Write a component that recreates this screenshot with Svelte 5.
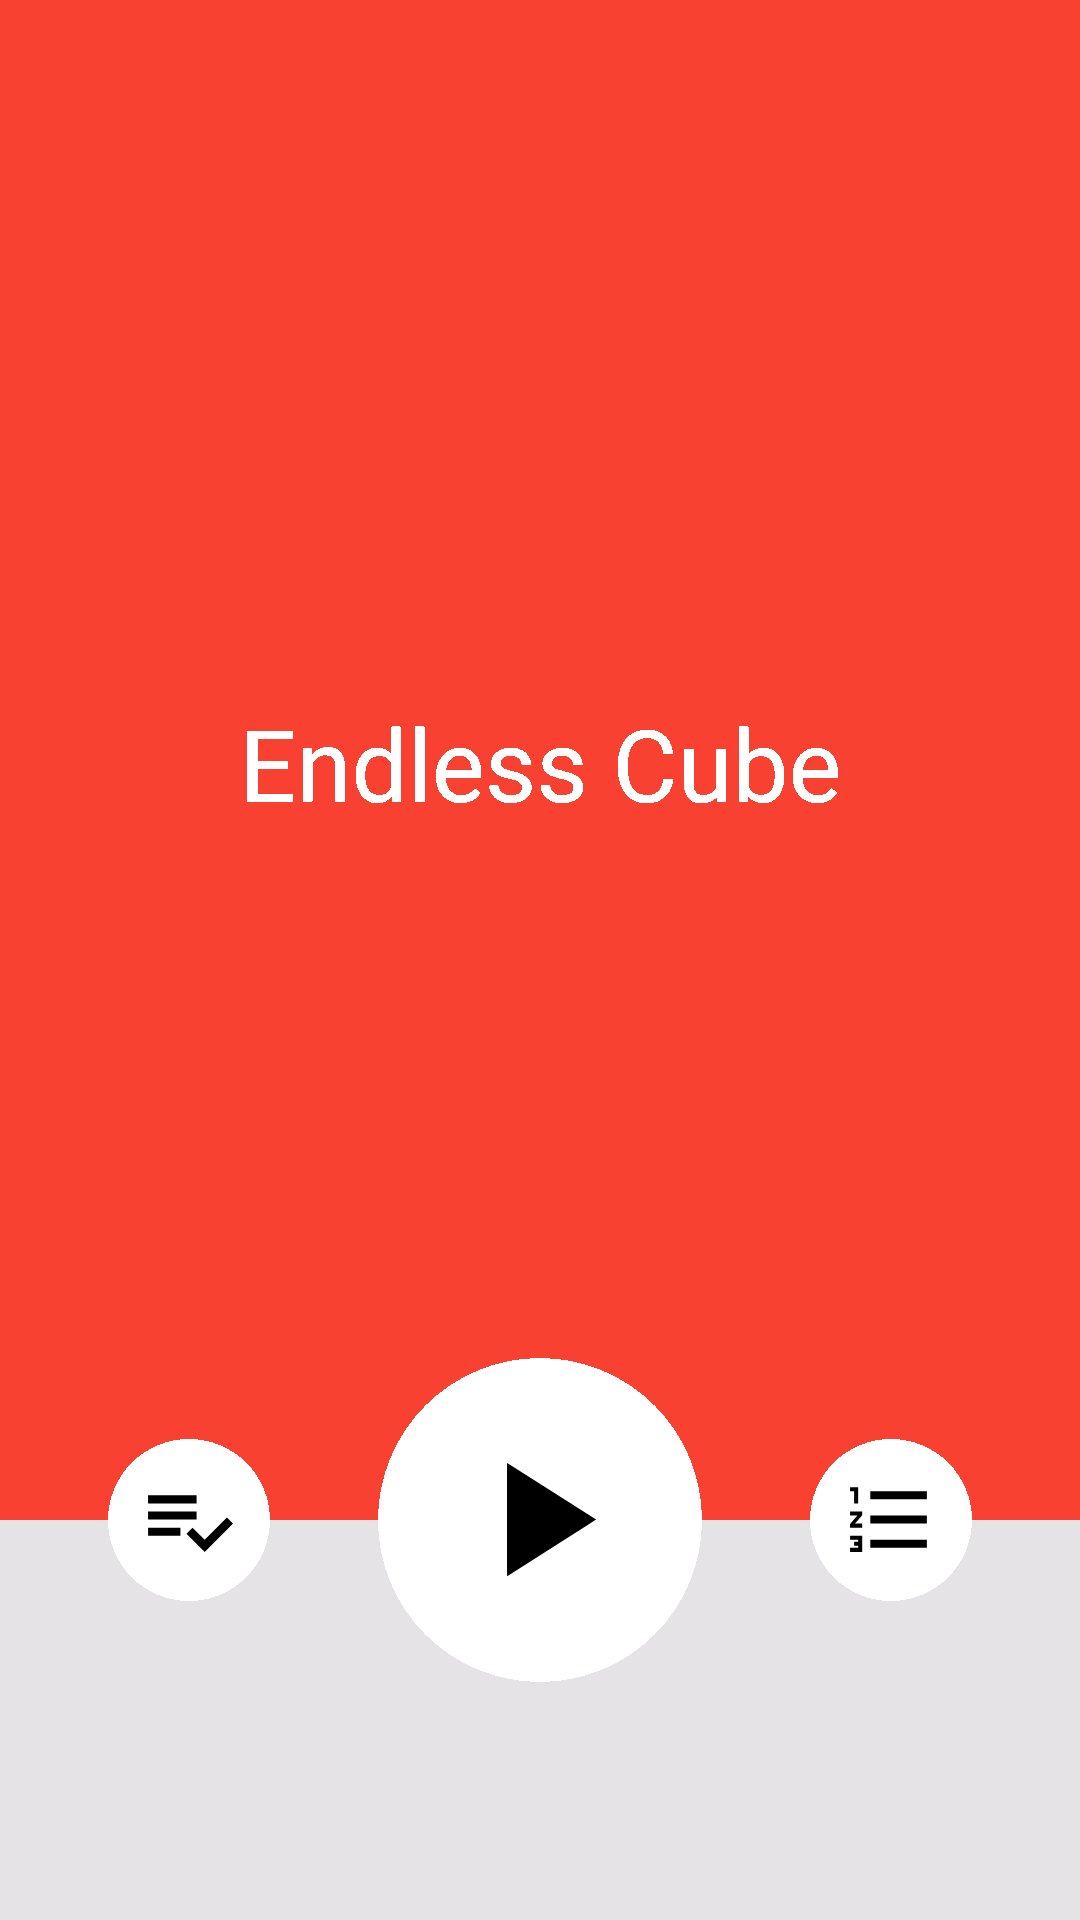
<script>
  const actions = [
    {
      label: 'Achievements',
      path: 'M14 10H2v2h12v-2zm0-4H2v2h12V6zM2 16h8v-2H2v2zm19.5-4.5L23 13l-6.99 7-4.51-4.5L13 14l3.01 3 5.49-5.5z'
    },
    { label: 'Play', large: true, path: 'M8 5v14l11-7z' },
    {
      label: 'Leaderboard',
      path: 'M2 17h2v.5H3v1h1v.5H2v1h3v-4H2v1zm1-9h1V4H2v1h1v3zm-1 3h1.8L2 13.1v.9h3v-1H3.2L5 10.9V10H2v1zm5-6v2h14V5H7zm0 14h14v-2H7v2zm0-6h14v-2H7v2z'
    }
  ];
</script>

<main class="screen">
  <!-- Hard pixel edges for the title -->
  <svg class="defs" aria-hidden="true">
    <filter id="crisp" x="0" y="0" width="1" height="1" color-interpolation-filters="sRGB">
      <feComponentTransfer>
        <feFuncA type="discrete" tableValues="0 1 1 1 1" />
      </feComponentTransfer>
    </filter>
  </svg>
  <header class="hero">
    <h1>Endless Cube</h1>
  </header>
  <nav class="actions">
    {#each actions as action}
      <button class="action" class:large={action.large} aria-label={action.label}>
        <!-- 40 unit disc with a 24 unit icon centred in it -->
        <svg class="icon" viewBox="0 0 40 40">
          <circle class="disc" cx="20" cy="20" r="20" />
          <path
            transform={action.large ? 'translate(7.93 7.95)' : 'translate(7.9 7.92) scale(0.998)'}
            d={action.path}
          />
        </svg>
      </button>
    {/each}
  </nav>
</main>

<style>
  :global(body) {
    background: #e5e3e6;
  }
  .screen {
    display: flex;
    flex-direction: column;
    width: 1080px;
    height: 1920px;
    overflow: hidden;
    background: #e5e3e6;
    font-family: Roboto, sans-serif;
  }
  .defs {
    position: absolute;
    width: 0;
    height: 0;
  }
  .hero {
    display: flex;
    flex: none;
    box-sizing: border-box;
    align-items: center;
    justify-content: center;
    height: 1520px;
    padding: 16px 0 0 1px;
    background: #f84131;
  }
  h1 {
    margin: 0;
    color: #fff;
    font-size: 100px;
    font-weight: 400;
    line-height: 118px;
    letter-spacing: -0.1px;
    white-space: nowrap;
    filter: url(#crisp);
  }
  .actions {
    display: flex;
    flex: none;
    align-items: center;
    justify-content: space-between;
    height: 324px;
    margin-top: -162px;
    padding: 0 108px;
  }
  .action {
    display: block;
    width: 162px;
    height: 162px;
    padding: 0;
    border: 0;
    background: none;
    cursor: pointer;
  }
  .action.large {
    width: 324px;
    height: 324px;
  }
  .icon {
    display: block;
    width: 100%;
    height: 100%;
  }
  .disc {
    fill: #fff;
    shape-rendering: crispEdges;
  }
</style>
